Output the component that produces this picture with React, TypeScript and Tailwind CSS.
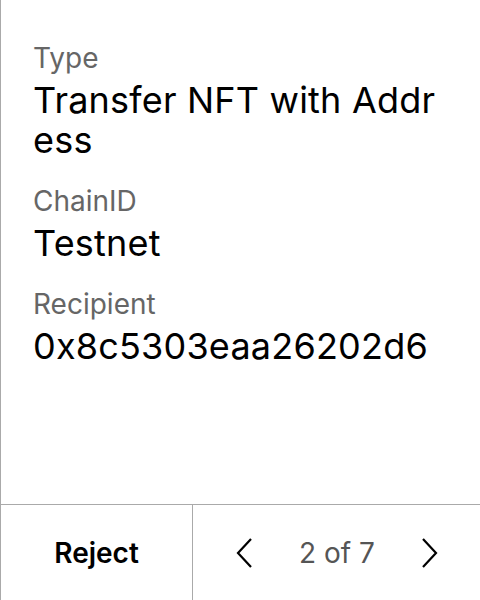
import React from "react";

interface Field {
  label: string;
  value: string;
}

const fields: Field[] = [
  { label: "Type", value: "Transfer NFT with Address" },
  { label: "ChainID", value: "Testnet" },
  { label: "Recipient", value: "0x8c5303eaa26202d6" },
];

const Chevron = ({ dir }: { dir: "left" | "right" }) => (
  <svg width="18" height="32" viewBox="0 0 18 32" fill="none" stroke="#000" strokeWidth="2.2">
    {dir === "left" ? <path d="M16 2 3 16l13 14" /> : <path d="M2 2l13 14L2 30" />}
  </svg>
);

const App = () => {
  return (
    <div
      className="w-[480px] h-[600px] flex flex-col bg-white border-l border-[#aaaaaa] text-black"
      style={{ fontFamily: "Inter, 'Noto Sans', sans-serif" }}
    >
      <div className="flex-1 flex flex-col gap-[25px] pl-[32px] pr-[32px] pt-[42px]">
        {fields.map(({ label, value }) => (
          <div key={label} className="flex flex-col gap-[6px]">
            <div className="text-[28px] leading-[32px] text-[#666666]">{label}</div>
            <div className="text-[36px] leading-[40px] tracking-[0.2px] break-all">{value}</div>
          </div>
        ))}
      </div>
      <div className="h-[96px] flex border-t border-[#aaaaaa]">
        <button className="w-[192px] flex items-center justify-center border-r border-[#aaaaaa] text-[28px] font-semibold">
          Reject
        </button>
        <div className="flex-1 flex items-center justify-between pl-[42px] pr-[41px]">
          <Chevron dir="left" />
          <span className="text-[28px] text-[#555555]">2 of 7</span>
          <Chevron dir="right" />
        </div>
      </div>
    </div>
  );
};

export default App;
